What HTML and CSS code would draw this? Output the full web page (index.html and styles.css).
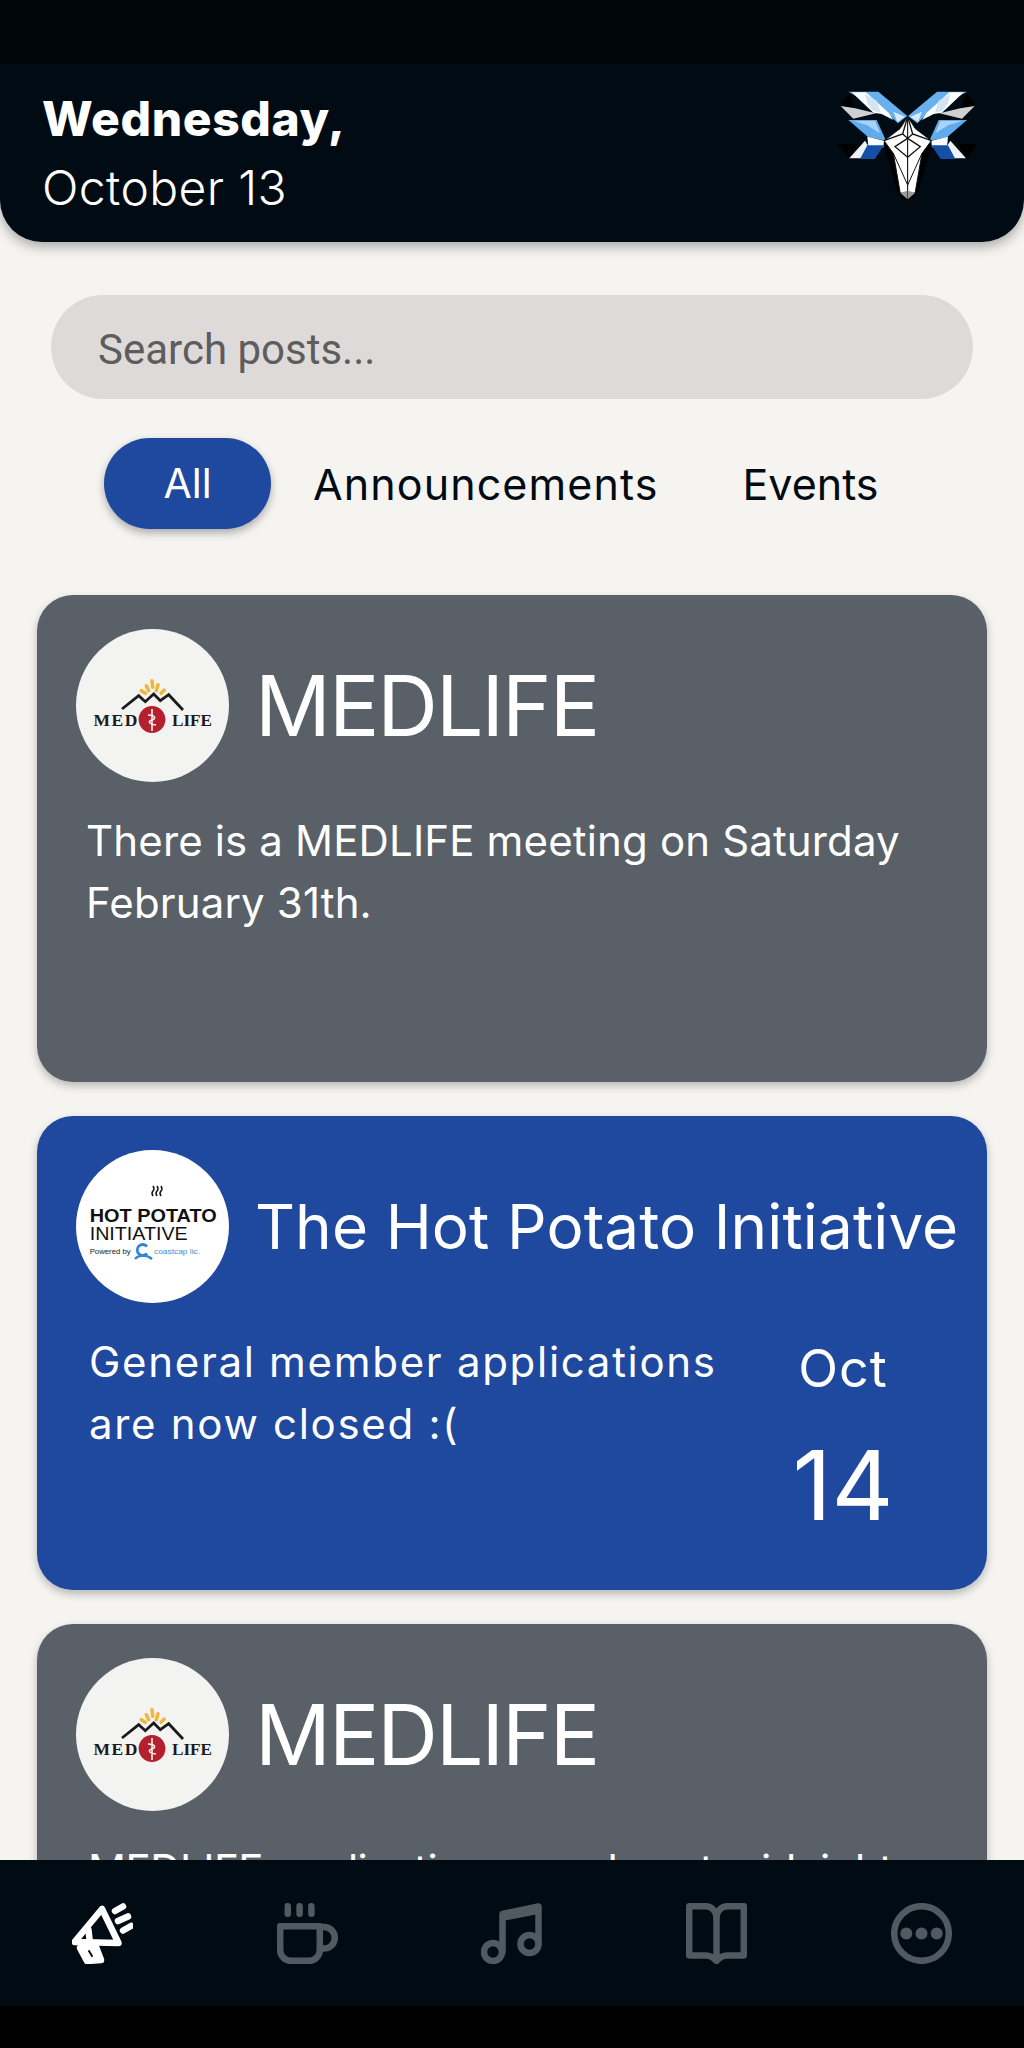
FILE: index.html
```html
<!DOCTYPE html>
<html lang="en">
<head>
    <meta charset="UTF-8">
    <meta name="viewport" content="width=device-width, initial-scale=1.0">
    <title>Posts</title>
    <link rel="stylesheet" href="styles.css">
</head>
<body>
    <div class="app">
        <header class="header">
            <div class="status-bar"></div>
            <div class="header-row">
                <div class="date">
                    <div class="date-day">Wednesday,</div>
                    <div class="date-month">October 13</div>
                </div>
                <!-- ram logo, right half is the left half mirrored -->
                <svg class="ram" viewBox="0 0 540 450">
                    <defs>
                        <g id="ramHalf">
                            <polygon points="118,65 88,108 132,114" fill="#000"/>
                            <polygon points="115,65 205,65 292,138 264,160 232,130" fill="#68b0ee"/>
                            <polygon points="125,67 168,67 236,128 250,150 215,132 190,128" fill="#fafcfe"/>
                            <polygon points="165,72 200,92 212,128 188,122 172,100" fill="#d4e4f3"/>
                            <polygon points="250,125 285,140 262,156" fill="#d9ebfa"/>
                            <polygon points="92,108 135,115 198,130 130,146" fill="#d0d0d0"/>
                            <polygon points="115,150 200,150 228,212 175,202" fill="#5fabec"/>
                            <polygon points="130,153 195,153 210,190 170,165" fill="#a9d2f5"/>
                            <polygon points="82,222 142,222 118,266" fill="#000"/>
                            <polygon points="172,200 222,212 220,232 175,230" fill="#fafcfe"/>
                            <polygon points="165,212 118,265 172,265 175,228" fill="#eef3f8"/>
                            <polygon points="172,226 222,226 194,267 150,267" fill="#1450a8"/>
                            <polygon points="222,225 262,365 275,385 293,392 293,300 250,230" fill="#000"/>
                            <polygon points="293,140 270,176 222,212 250,250 270,365 293,388" fill="#fff" stroke="#111" stroke-width="3"/>
                            <polyline points="293,140 278,192 222,212" fill="none" stroke="#111" stroke-width="4"/>
                            <polyline points="278,192 293,205 255,230 293,262" fill="none" stroke="#111" stroke-width="4"/>
                            <polyline points="250,250 293,345" fill="none" stroke="#111" stroke-width="3"/>
                            <polygon points="293,362 270,368 293,388" fill="#999"/>
                        </g>
                    </defs>
                    <use href="#ramHalf"/>
                    <use href="#ramHalf" transform="translate(586 0) scale(-1 1)"/>
                </svg>
            </div>
        </header>

        <main class="content">
            <div class="search">Search posts...</div>

            <div class="filters">
                <span class="filter filter-active">All</span>
                <span class="filter filter-announce">Announcements</span>
                <span class="filter filter-events">Events</span>
            </div>

            <div class="feed">
                <section class="card card-gray card-first">
                    <div class="card-head">
                        <svg class="club-logo" viewBox="0 0 153 153">
                            <circle cx="76.5" cy="76.5" r="76.5" fill="#f3f3f2"/>
                            <g fill="none" stroke="#f0b63c" stroke-width="3.5" stroke-linecap="round">
                                <line x1="65.3" y1="61.7" x2="69.3" y2="64.3"/>
                                <line x1="70.3" y1="56.7" x2="72.7" y2="61.7"/>
                                <line x1="76" y1="51.7" x2="76.7" y2="58.3"/>
                                <line x1="82" y1="55.7" x2="80.3" y2="61.7"/>
                                <line x1="88.3" y1="61" x2="85" y2="64.3"/>
                            </g>
                            <polyline points="46,80 62.7,66.7 69.3,72.7 77.7,65 84.3,71.7 92.7,65.7 107,81" fill="none" stroke="#1b1b1b" stroke-width="2.8"/>
                            <circle cx="76" cy="90.5" r="13.4" fill="#b5202f"/>
                            <path d="M76 80 V102 M72 86 C80 86 80 90 76 91 C72 92 72 95 80 96" fill="none" stroke="#f3f3f2" stroke-width="1.6"/>
                            <text class="logo-serif" x="17.5" y="96.7" textLength="44" lengthAdjust="spacing">MED</text>
                            <text class="logo-serif" x="96" y="96.7" textLength="40" lengthAdjust="spacingAndGlyphs">LIFE</text>
                        </svg>
                        <h2 class="card-title">MEDLIFE</h2>
                    </div>
                    <p class="card-text">There is a MEDLIFE meeting on Saturday<br>February 31th.</p>
                </section>

                <section class="card card-blue">
                    <div class="card-head">
                        <svg class="club-logo" viewBox="0 0 153 153">
                            <circle cx="76.5" cy="76.5" r="76.5" fill="#fff"/>
                            <path d="M77 46 q-2 -3 0 -5 t0 -5 M81 46 q-2 -3 0 -5 t0 -5 M85 46 q-2 -3 0 -5 t0 -5" fill="none" stroke="#111" stroke-width="1.5"/>
                            <text class="logo-hot" x="13.7" y="71.7" textLength="127" lengthAdjust="spacingAndGlyphs">HOT POTATO</text>
                            <text class="logo-init" x="13.7" y="90" textLength="98" lengthAdjust="spacingAndGlyphs">INITIATIVE</text>
                            <text class="logo-small" x="13.7" y="104" textLength="41" lengthAdjust="spacingAndGlyphs">Powered by</text>
                            <path d="M71 96.5 A5.5 5.5 0 1 0 71 103.5" fill="none" stroke="#2f86d6" stroke-width="2.8"/>
                            <path d="M59 109 C63 104.5 71 104.5 76 109" fill="none" stroke="#2f86d6" stroke-width="2.4"/>
                            <text class="logo-coast" x="78" y="104" textLength="46" lengthAdjust="spacingAndGlyphs">coastcap lic.</text>
                        </svg>
                        <h2 class="card-title card-title-long">The Hot Potato Initiative</h2>
                    </div>
                    <div class="card-row">
                        <p class="card-text card-text-event">General member applications<br>are now closed :(</p>
                        <div class="event-date">
                            <div class="event-month">Oct</div>
                            <div class="event-day">14</div>
                        </div>
                    </div>
                </section>

                <section class="card card-gray">
                    <div class="card-head">
                        <svg class="club-logo" viewBox="0 0 153 153">
                            <circle cx="76.5" cy="76.5" r="76.5" fill="#f3f3f2"/>
                            <g fill="none" stroke="#f0b63c" stroke-width="3.5" stroke-linecap="round">
                                <line x1="65.3" y1="61.7" x2="69.3" y2="64.3"/>
                                <line x1="70.3" y1="56.7" x2="72.7" y2="61.7"/>
                                <line x1="76" y1="51.7" x2="76.7" y2="58.3"/>
                                <line x1="82" y1="55.7" x2="80.3" y2="61.7"/>
                                <line x1="88.3" y1="61" x2="85" y2="64.3"/>
                            </g>
                            <polyline points="46,80 62.7,66.7 69.3,72.7 77.7,65 84.3,71.7 92.7,65.7 107,81" fill="none" stroke="#1b1b1b" stroke-width="2.8"/>
                            <circle cx="76" cy="90.5" r="13.4" fill="#b5202f"/>
                            <path d="M76 80 V102 M72 86 C80 86 80 90 76 91 C72 92 72 95 80 96" fill="none" stroke="#f3f3f2" stroke-width="1.6"/>
                            <text class="logo-serif" x="17.5" y="96.7" textLength="44" lengthAdjust="spacing">MED</text>
                            <text class="logo-serif" x="96" y="96.7" textLength="40" lengthAdjust="spacingAndGlyphs">LIFE</text>
                        </svg>
                        <h2 class="card-title">MEDLIFE</h2>
                    </div>
                    <p class="card-text card-text-cut">MEDLIFE applications are due at midnight</p>
                </section>
            </div>
        </main>

        <nav class="nav">
            <div class="nav-item nav-item-active">
                <svg viewBox="0 0 61 61">
                    <polygon points="30,6 2.5,39 46.5,40"/>
                    <polygon class="nav-solid" points="8,45 15,58 29,57 24,44"/>
                    <line class="nav-slot" x1="17" y1="48" x2="20" y2="53"/>
                    <line x1="16.5" y1="27" x2="18" y2="41"/>
                    <line x1="43" y1="8" x2="51" y2="3.5"/>
                    <line x1="46" y1="18" x2="56" y2="13.5"/>
                    <line x1="51" y1="27.5" x2="59" y2="23"/>
                </svg>
            </div>
            <div class="nav-item">
                <svg viewBox="0 0 61 61">
                    <path d="M3.2 23.2 H42.8 V47 A10.8 10.8 0 0 1 32 57.8 H14 A10.8 10.8 0 0 1 3.2 47 Z"/>
                    <path d="M43 24 H47 A10.8 10.8 0 0 1 47 45.6 H43"/>
                    <line x1="10.8" y1="3.2" x2="10.8" y2="10.8"/>
                    <line x1="22.6" y1="3.2" x2="22.6" y2="10.8"/>
                    <line x1="34.4" y1="3.2" x2="34.4" y2="10.8"/>
                </svg>
            </div>
            <div class="nav-item">
                <svg viewBox="0 0 61 61">
                    <polygon class="nav-fill" points="21.5,11 57.5,3.5 57.5,11 21.5,18"/>
                    <path d="M21.5 49 V11 L57.5 3.5 V41"/>
                    <circle cx="12" cy="49" r="9"/>
                    <circle cx="48.5" cy="41" r="9"/>
                </svg>
            </div>
            <div class="nav-item">
                <svg viewBox="0 0 61 61">
                    <path d="M30.5 16 C30.5 8 26 3.2 19 3.2 H3.2 V52.5 H20 C25 52.5 28 55 30.5 58 C33 55 36 52.5 41 52.5 H57.8 V3.2 H42 C35 3.2 30.5 8 30.5 16 V58"/>
                </svg>
            </div>
            <div class="nav-item">
                <svg viewBox="0 0 61 61">
                    <circle cx="30.5" cy="30.5" r="27.3"/>
                    <circle class="nav-fill" cx="15.3" cy="30.5" r="6"/>
                    <circle class="nav-fill" cx="30.5" cy="30.5" r="6"/>
                    <circle class="nav-fill" cx="45.7" cy="30.5" r="6"/>
                </svg>
            </div>
        </nav>
        <div class="system-bar"></div>
    </div>
</body>
</html>
```

FILE: styles.css
```css
body {
    margin: 0;
    background-color: #f6f4f1;
    font-family: 'Inter', 'Liberation Sans', sans-serif;
}
.app {
    width: 1024px;
    height: 2048px;
    display: flex;
    flex-direction: column;
    overflow: hidden;
}

/* Header */
.header {
    flex: none;
    height: 242px;
    background-color: #010b13;
    border-radius: 0 0 42px 42px;
    box-shadow: 0 5px 12px rgba(0, 0, 0, 0.3);
    position: relative;
    z-index: 2;
    color: white;
}
.status-bar {
    height: 63px;
    background-color: #00060c;
}
.header-row {
    display: flex;
    justify-content: space-between;
    align-items: flex-start;
    padding: 7px 34px 0 42px;
}
.date {
    padding-top: 14px;
}
.date-day {
    font-size: 48px;
    line-height: 69px;
    font-weight: 800;
    letter-spacing: 0.6px;
}
.date-month {
    font-size: 48px;
    line-height: 69px;
    font-weight: 300;
    letter-spacing: 0.4px;
}
.ram {
    width: 180px;
    height: 150px;
}

/* Search and filters */
.content {
    flex: 1;
    min-height: 0;
    overflow: hidden;
    padding-top: 53px;
}
.search {
    margin: 0 51px;
    height: 104px;
    line-height: 110px;
    padding-left: 47px;
    border-radius: 52px;
    background-color: #dfdada;
    color: #5d5d5d;
    font-family: 'Roboto', sans-serif;
    font-size: 42px;
}
.filters {
    display: flex;
    align-items: center;
    height: 91px;
    margin-top: 39px;
    padding-left: 104px;
    color: #010b13;
    font-size: 43px;
}
.filter-active {
    width: 167px;
    height: 91px;
    line-height: 91px;
    text-align: center;
    border-radius: 46px;
    background-color: #1f489f;
    color: white;
    font-size: 41px;
    box-shadow: 0 4px 8px rgba(0, 0, 0, 0.3);
}
.filter-announce {
    margin-left: 42px;
    letter-spacing: 1.1px;
}
.filter-events {
    margin-left: 84px;
}

/* Post cards */
.feed {
    display: flex;
    flex-direction: column;
    gap: 34px;
    margin-top: 66px;
    padding: 0 37px;
}
.card {
    min-height: 474px;
    box-sizing: border-box;
    padding: 34px 30px 0 39px;
    border-radius: 36px;
    color: white;
    box-shadow: 0 4px 8px rgba(0, 0, 0, 0.25);
}
.card-gray {
    background-color: #596067;
}
.card-blue {
    background-color: #1f489f;
}
.card-first {
    min-height: 487px;
}
.card-head {
    display: flex;
    align-items: center;
    gap: 26px;
}
.club-logo {
    flex: none;
    width: 153px;
    height: 153px;
}
.card-title {
    margin: 0;
    font-size: 84px;
    font-weight: 400;
    letter-spacing: -2px;
}
.card-title-long {
    font-size: 62px;
    letter-spacing: 0.1px;
    white-space: nowrap;
}
.card-text {
    margin: 28px 0 0 10px;
    font-size: 42px;
    line-height: 62px;
    letter-spacing: 0.15px;
    white-space: nowrap;
}
.card-row {
    display: flex;
    justify-content: space-between;
}
.card-text-event {
    margin-left: 13px;
    letter-spacing: 1.7px;
}
.card-text-cut {
    margin-left: 12px;
    letter-spacing: -0.5px;
}
.event-date {
    width: 120px;
    margin: 31px 54px 0 0;
    text-align: center;
}
.event-month {
    font-size: 52px;
    line-height: 70px;
    letter-spacing: 1px;
}
.event-day {
    font-size: 96px;
    line-height: 120px;
    margin-top: 21px;
    font-weight: 400;
}

/* Logo lettering */
.logo-serif {
    font-family: 'Liberation Serif', serif;
    font-weight: bold;
    font-size: 17.5px;
    fill: #1b1b1b;
}
.logo-hot {
    font-family: 'Liberation Sans', sans-serif;
    font-weight: bold;
    font-size: 18.5px;
    fill: #111;
}
.logo-init {
    font-family: 'Liberation Sans', sans-serif;
    font-size: 18px;
    fill: #111;
}
.logo-small {
    font-family: 'Liberation Sans', sans-serif;
    font-size: 7.5px;
    fill: #222;
}
.logo-coast {
    font-family: 'Liberation Sans', sans-serif;
    font-size: 8px;
    fill: #3a8fd8;
}

/* Bottom navigation */
.nav {
    flex: none;
    height: 146px;
    display: flex;
    background-color: #010b13;
    position: relative;
    z-index: 2;
}
.nav-item {
    flex: 1;
    display: flex;
    align-items: center;
    justify-content: center;
}
.nav-item svg {
    width: 61px;
    height: 61px;
    fill: none;
    stroke: #525a61;
    stroke-width: 6.5;
    stroke-linecap: round;
    stroke-linejoin: round;
}
.nav-item .nav-fill {
    fill: #525a61;
    stroke: none;
}
.nav-item-active svg {
    stroke: white;
}
.nav-item .nav-solid {
    fill: white;
}
.nav-item .nav-slot {
    stroke: #010b13;
    stroke-width: 2;
}
.system-bar {
    flex: none;
    height: 42px;
    background-color: #000;
    position: relative;
    z-index: 2;
}
```
